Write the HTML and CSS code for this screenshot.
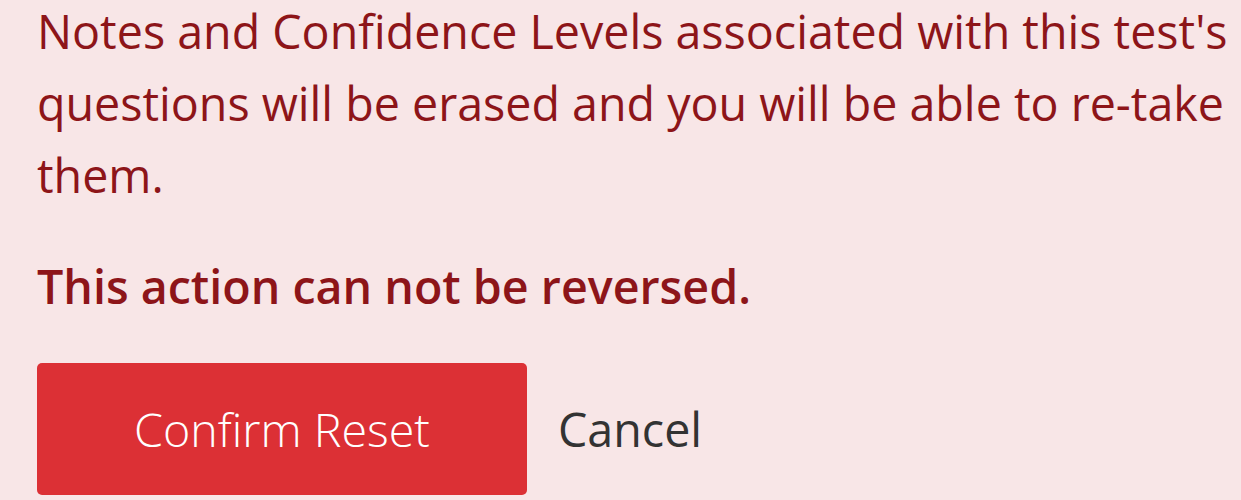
FILE: index.html
```html
<!DOCTYPE html>
<html lang="en">
<head>
<meta charset="utf-8">
<title>Reset</title>
<link rel="stylesheet" href="styles.css">
</head>
<body>
<div class="alert">
  <p class="msg">Notes and Confidence Levels associated with this test's questions will be erased and you will be able to re-take them.</p>
  <p class="warn">This action can not be reversed.</p>
  <div class="actions">
    <button class="btn-confirm" type="button">Confirm Reset</button>
    <button class="btn-cancel" type="button">Cancel</button>
  </div>
</div>
</body>
</html>
```
FILE: styles.css
```css
html, body {
  margin: 0;
  padding: 0;
  background: #f8e6e7;
}
body {
  font-family: "Open Sans", "Noto Sans", sans-serif;
  font-size: 46.6px;
  line-height: 72px;
  color: #8d1519;
  overflow: hidden;
  height: 500px;
}
.alert {
  padding: 0 0 0 37px;
  margin-top: -5px;
}
.msg {
  margin: 0 0 39px 0;
}
.warn {
  margin: 0 0 41px 0;
  font-weight: 600;
}
.actions {
  display: flex;
  align-items: center;
  gap: 31px;
}
.btn-confirm {
  font: inherit;
  font-weight: 300;
  line-height: 72px;
  width: 490px;
  height: 132px;
  padding: 0;
  border: none;
  border-radius: 5px;
  background: #dc3035;
  color: #fff;
}
.btn-cancel {
  font: inherit;
  line-height: 72px;
  padding: 0;
  border: none;
  background: none;
  color: #333333;
}
```
